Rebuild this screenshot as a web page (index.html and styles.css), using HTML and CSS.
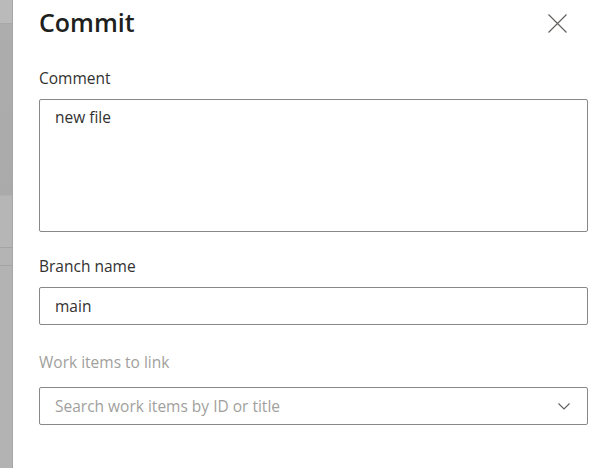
FILE: index.html
```html
<!DOCTYPE html>
<html>
<head>
<meta charset="utf-8">
<link rel="stylesheet" href="styles.css">
</head>
<body>
<div class="page">
  <div class="backdrop">
    <div class="bd-top"></div>
    <div class="bd-mid"></div>
    <div class="bd-row"></div>
    <div class="bd-rest"></div>
  </div>
  <div class="panel">
    <div class="header">
      <h1 class="title">Commit</h1>
      <button class="close" aria-label="Close">
        <svg width="19" height="19" viewBox="0 0 19 19"><path d="M0.5 0.5 L18.5 18.5 M18.5 0.5 L0.5 18.5" stroke="#605e5c" stroke-width="1.1" fill="none"/></svg>
      </button>
    </div>
    <label class="label l-comment">Comment</label>
    <div class="textarea">new file</div>
    <label class="label l-branch">Branch name</label>
    <div class="input">main</div>
    <label class="label disabled l-work">Work items to link</label>
    <div class="input search">
      <span class="placeholder">Search work items by ID or title</span>
      <svg class="chev" width="12" height="7" viewBox="0 0 12 7"><path d="M0.5 0.5 L6 6 L11.5 0.5" stroke="#605e5c" stroke-width="1.1" fill="none"/></svg>
    </div>
  </div>
</div>
</body>
</html>
```
FILE: styles.css
```css
html, body {
  margin: 0;
  padding: 0;
  background: #ffffff;
}
.page {
  display: flex;
  width: 595px;
  height: 468px;
  overflow: hidden;
  font-family: "Open Sans", "Noto Sans", sans-serif;
  color: #323130;
}
.backdrop {
  width: 13px;
  flex: none;
  display: flex;
  flex-direction: column;
  background: #b3b3b3;
  border-right: 1px solid #a6a6a6;
  box-sizing: border-box;
}
.bd-top {
  height: 23px;
  background: #bababa;
  border-bottom: 1px solid #a8a8a8;
}
.bd-mid {
  height: 171px;
  background: linear-gradient(#adadad, #aaaaaa);
  border-bottom: 1px solid #b0b0b0;
}
.bd-row {
  height: 51px;
  background: #b6b6b6;
  border-bottom: 1px solid #a4a4a4;
}
.bd-rest {
  height: 17px;
  background: #b4b4b4;
  border-bottom: 1px solid #a4a4a4;
}
.panel {
  flex: 1;
  display: flex;
  flex-direction: column;
  padding: 6px 7px 0 26px;
}
.header {
  display: flex;
  align-items: center;
  justify-content: space-between;
  padding-right: 21px;
}
.title {
  margin: 0;
  font-size: 25px;
  line-height: 32px;
  font-weight: 600;
  color: #201f1e;
}
.close {
  border: 0;
  background: none;
  padding: 0;
  width: 19px;
  height: 19px;
  display: flex;
  margin-top: 3px;
}
.label {
  display: block;
  font-size: 15.5px;
  line-height: 20px;
  color: #323130;
}
.label.disabled {
  color: #a19f9d;
}
.l-comment { margin-top: 30px; margin-bottom: 11px; }
.l-branch { margin-top: 24px; margin-bottom: 11px; }
.l-work { margin-top: 27px; margin-bottom: 15px; }
.textarea, .input {
  box-sizing: border-box;
  border: 1px solid #8a8886;
  border-radius: 2px;
  font-size: 15.5px;
  color: #323130;
}
.textarea {
  height: 133px;
  padding: 5px 15px;
  line-height: 24px;
}
.input {
  height: 38px;
  display: flex;
  align-items: center;
  padding: 0 15px;
  line-height: 20px;
}
.search {
  justify-content: space-between;
  padding-right: 17px;
}
.placeholder {
  color: #a19f9d;
}
.chev {
  display: block;
}
```
